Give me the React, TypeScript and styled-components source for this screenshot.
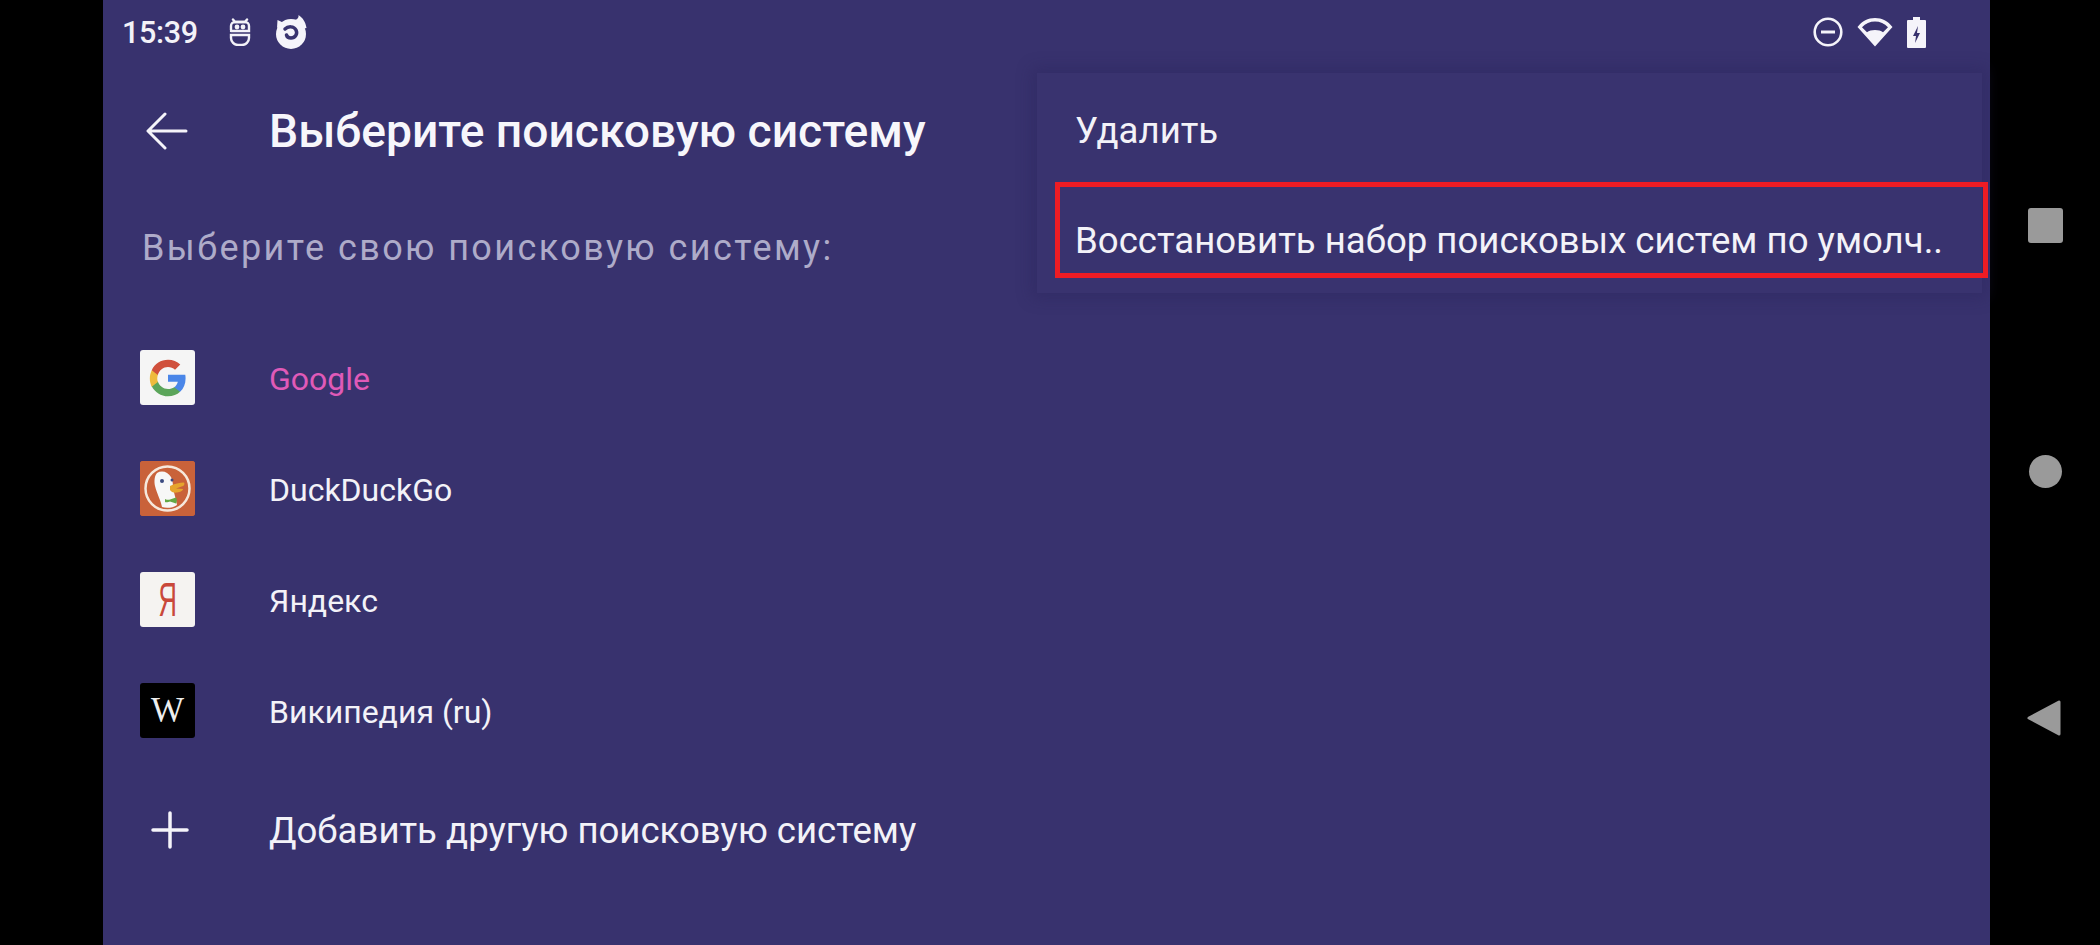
import styled, { createGlobalStyle } from "styled-components";

const GlobalStyle = createGlobalStyle`
  html, body {
    margin: 0;
    padding: 0;
    background: #000;
    font-family: Roboto, "Noto Sans", sans-serif;
  }
`;

const Wrapper = styled.div`
  width: 2100px;
  height: 945px;
  display: flex;
  overflow: hidden;
  background: #000;
`;

const LeftEdge = styled.div`
  width: 103px;
  flex-shrink: 0;
`;

const Screen = styled.div`
  position: relative;
  width: 1887px;
  flex-shrink: 0;
  background: #38326e;
  color: #f3f2f8;
  display: flex;
  flex-direction: column;
`;

const StatusBar = styled.div`
  height: 66px;
  box-sizing: border-box;
  display: flex;
  align-items: center;
  padding: 0 64px 2px 19px;
`;

const Time = styled.span`
  font-size: 30.5px;
  font-weight: 500;
  letter-spacing: -0.3px;
  width: 107px;
`;

const StatusLeft = styled.div`
  display: flex;
  align-items: center;
  gap: 23px;
  flex: 1;
`;

const StatusRight = styled.div`
  display: flex;
  align-items: center;
  gap: 14px;
`;

const Toolbar = styled.div`
  height: 130px;
  display: flex;
  align-items: center;
`;

const IconSlot = styled.div`
  width: 166px;
  flex-shrink: 0;
  padding-left: 43px;
  box-sizing: border-box;
  display: flex;
  align-items: center;
`;

const Title = styled.h1`
  margin: 0;
  font-size: 46.2px;
  font-weight: 500;
  color: #f7f6fb;
`;

const SectionLabel = styled.div`
  margin: 7px 0 0 39px;
  height: 90px;
  font-size: 36px;
  line-height: 90px;
  letter-spacing: 2.4px;
  color: #aeabc9;
`;

const List = styled.div`
  display: flex;
  flex-direction: column;
  margin-top: 29px;
`;

const Row = styled.div`
  height: 111px;
  display: flex;
  align-items: center;
`;

const LogoSlot = styled.div<{ $inset?: number }>`
  width: 166px;
  flex-shrink: 0;
  padding-left: ${p => p.$inset ?? 37}px;
  box-sizing: border-box;
  display: flex;
`;

const LogoBox = styled.div<{ $bg: string; $fg?: string }>`
  width: 55px;
  height: 55px;
  border-radius: 3px;
  background: ${p => p.$bg};
  color: ${p => p.$fg || "#fff"};
  display: flex;
  align-items: center;
  justify-content: center;
  overflow: hidden;
`;

const YandexLetter = styled.span`
  font-family: "Liberation Sans", sans-serif;
  font-size: 49px;
  line-height: 1;
  display: inline-block;
  transform: scaleX(0.52);
`;

const WikiLetter = styled.span`
  font-family: "Liberation Serif", serif;
  font-size: 35px;
  line-height: 1;
  color: #eeeeee;
`;

const RowText = styled.span<{ $accent?: boolean; $large?: boolean }>`
  font-size: ${p => (p.$large ? 36.6 : 32)}px;
  padding-top: 2px;
  color: ${p => (p.$accent ? "#e05ab8" : "#f3f2f8")};
`;

const AddRow = styled(Row)`
  height: 125px;
  margin-top: 1px;
`;

const Menu = styled.div`
  position: absolute;
  top: 73px;
  right: 8px;
  width: 945px;
  height: 220px;
  background: #39336f;
  box-shadow: 0 0 14px 5px rgba(40, 34, 90, 0.35);
  box-sizing: border-box;
  padding: 2px 38px 0;
`;

const MenuItem = styled.div`
  height: 110px;
  display: flex;
  align-items: center;
  font-size: 36.6px;
  white-space: nowrap;
  color: #f3f2f8;
`;

const Highlight = styled.div`
  position: absolute;
  top: 182px;
  left: 952px;
  width: 933px;
  height: 96px;
  box-sizing: border-box;
  border: 5px solid #ed1c24;
`;

const NavRail = styled.div`
  width: 110px;
  flex-shrink: 0;
  padding-top: 208px;
  box-sizing: border-box;
  display: flex;
  flex-direction: column;
  align-items: center;
  gap: 212px;
`;

const NavSquare = styled.div`
  width: 35px;
  height: 35px;
  border-radius: 3px;
  background: #9a9a9a;
`;

const NavCircle = styled.div`
  width: 33px;
  height: 33px;
  border-radius: 50%;
  background: #9a9a9a;
`;

const NavBack = styled.svg`
  margin-right: 3px;
`;

const BackSvg = () => (
  <svg width="42" height="38" viewBox="0 0 42 38" fill="none" stroke="#f5f4fa" strokeWidth="3" strokeLinecap="round" strokeLinejoin="round">
    <path d="M40 19H3M19 2 2 19l17 17" />
  </svg>
);

const BotIcon = () => (
  <svg width="22" height="28" viewBox="0 0 22 28" fill="none" stroke="#f3f2f8" strokeWidth="2.4" strokeLinecap="round">
    <path d="M4 1.500l2 2.500h10l2-2.500" />
    <path d="M2 12V8a4 4 0 0 1 4-4h10a4 4 0 0 1 4 4v5H2" />
    <path d="M2 17h18v3a7 7 0 0 1-7 7H9a7 7 0 0 1-7-7z" />
    <circle cx="8" cy="9" r="1.200" fill="#f3f2f8" />
    <circle cx="14" cy="9" r="1.200" fill="#f3f2f8" />
  </svg>
);

const FoxIcon = () => (
  <svg width="34" height="34" viewBox="0 0 34 34">
    <circle cx="17" cy="19" r="15" fill="#f5f4fa" />
    <path fill="#f5f4fa" d="M18 6c5-1 7-3 6.500-6C29 3 31.500 7 32.500 13L24 15z" />
    <path fill="#f5f4fa" d="M3 13 3.500 5 10 8z" />
    <path fill="none" stroke="#38326e" strokeWidth="3.500" strokeLinecap="round" d="M11 14c3-3 9-3 11 1 2 4-1 8-5 8-2 0-4-1-4.500-3" />
  </svg>
);

const DndIcon = () => (
  <svg width="30" height="30" viewBox="0 0 30 30" fill="none" stroke="#f5f4fa" strokeWidth="2.6">
    <circle cx="15" cy="15" r="13.300" />
    <path d="M8 15h14" strokeWidth="3" />
  </svg>
);

const WifiIcon = () => (
  <svg width="36" height="30" viewBox="0 0 36 30">
    <path fill="#f5f4fa" fillRule="evenodd" d="M18 29.500 0.500 10C5 4 11 1 18 1s13 3 17.500 9zM18 13c3.500 0 6 .8 8 2.300l5-5C27.500 6.500 23 4.500 18 4.500S8.500 6.500 5 10.300l5 5c2-1.500 4.500-2.300 8-2.300z" />
  </svg>
);

const BatteryIcon = () => (
  <svg width="19" height="31" viewBox="0 0 19 31">
    <path fill="#f5f4fa" fillRule="evenodd" d="M6 0h7v3h5a1 1 0 0 1 1 1v26a1 1 0 0 1-1 1H1a1 1 0 0 1-1-1V4a1 1 0 0 1 1-1h5zM11 9l-5 10h3l-1 7 5-10h-3z" />
  </svg>
);

const PlusIcon = () => (
  <svg width="38" height="38" viewBox="0 0 38 38" stroke="#f5f4fa" strokeWidth="3.500" strokeLinecap="round">
    <path d="M19 2v34M2 19h34" />
  </svg>
);

const GoogleLogo = () => (
  <svg width="40" height="40" viewBox="0 0 48 48">
    <path fill="#4a86e8" d="M45.100 24.500c0-1.600-.1-3.100-.4-4.500H24v8.500h11.800c-.5 2.700-2.100 5-4.400 6.600v5.500h7.100c4.200-3.800 6.600-9.500 6.600-16.100z" />
    <path fill="#5ba55a" d="M24 46c5.900 0 10.900-2 14.500-5.400l-7.100-5.500c-2 1.300-4.500 2.100-7.400 2.100-5.700 0-10.500-3.800-12.200-9H4.500v5.700C8.100 41.100 15.500 46 24 46z" />
    <path fill="#eebb3d" d="M11.800 28.700c-.4-1.300-.7-2.700-.7-4.200s.3-2.900.7-4.200v-5.700H4.500C3 17.600 2.200 20.900 2.200 24.500s.8 6.900 2.300 9.900z" />
    <path fill="#d0503c" d="M24 10.900c3.200 0 6.100 1.100 8.400 3.300l6.300-6.300C34.900 4.300 29.900 2.200 24 2.200 15.500 2.200 8.100 7.100 4.500 14.600l7.300 5.700c1.700-5.600 6.500-9.400 12.200-9.400z" />
  </svg>
);

const DuckLogo = () => (
  <svg width="55" height="55" viewBox="0 0 55 55">
    <rect width="55" height="55" fill="#c9623a" />
    <circle cx="27.500" cy="27.500" r="22" fill="#c9623a" stroke="#f6e8dc" strokeWidth="2.500" />
    <path fill="#f7f7f7" d="M17 12c5-3 11-1 14 4 2 4 2 8 2 11 1 5 3 11 4 17-4 3-11 3.500-15 2-1-6-5-13-7-21-1-5-.5-10 2-13z" />
    <path fill="#e6a52e" d="M30 25c4-2 10-3.500 14-3.500 1 1 0 3-1 3.500l-7 2.500 7 .5c0 2-3 3-6 3.500-3 .5-6-.5-7-2.500z" />
    <path fill="#64a844" d="M25 38c2 1 4 1 5 .5l6-2c1 1 1 5 0 6l-6-2c-1 .5-4 1-5 .5z" />
    <circle cx="22" cy="20" r="2" fill="#3a4a80" />
    <circle cx="32" cy="19" r="1.500" fill="#3a4a80" />
  </svg>
);

const BackTriangle = () => (
  <NavBack width="34" height="36" viewBox="0 0 34 36">
    <path fill="#9a9a9a" stroke="#9a9a9a" strokeWidth="3" strokeLinejoin="round" d="M32 2v32L2 18z" />
  </NavBack>
);

const engines = [
  { name: "Google", accent: true, logo: <LogoBox $bg="#f5f5f5"><GoogleLogo /></LogoBox> },
  { name: "DuckDuckGo", logo: <LogoBox $bg="#c9623a"><DuckLogo /></LogoBox> },
  { name: "Яндекс", logo: <LogoBox $bg="#f5f3f1" $fg="#c9483a"><YandexLetter>Я</YandexLetter></LogoBox> },
  { name: "Википедия (ru)", logo: <LogoBox $bg="#000"><WikiLetter>W</WikiLetter></LogoBox> },
];

function App() {
  return (
    <>
      <GlobalStyle />
      <Wrapper>
        <LeftEdge />
        <Screen>
          <StatusBar>
            <Time>15:39</Time>
            <StatusLeft>
              <BotIcon />
              <FoxIcon />
            </StatusLeft>
            <StatusRight>
              <DndIcon />
              <WifiIcon />
              <BatteryIcon />
            </StatusRight>
          </StatusBar>
          <Toolbar>
            <IconSlot>
              <BackSvg />
            </IconSlot>
            <Title>Выберите поисковую систему</Title>
          </Toolbar>
          <SectionLabel>Выберите свою поисковую систему:</SectionLabel>
          <List>
            {engines.map(engine => (
              <Row key={engine.name}>
                <LogoSlot>{engine.logo}</LogoSlot>
                <RowText $accent={engine.accent}>{engine.name}</RowText>
              </Row>
            ))}
            <AddRow>
              <LogoSlot $inset={48}>
                <PlusIcon />
              </LogoSlot>
              <RowText $large>Добавить другую поисковую систему</RowText>
            </AddRow>
          </List>
          <Menu>
            <MenuItem>Удалить</MenuItem>
            <MenuItem>Восстановить набор поисковых систем по умолч..</MenuItem>
          </Menu>
          <Highlight />
        </Screen>
        <NavRail>
          <NavSquare />
          <NavCircle />
          <BackTriangle />
        </NavRail>
      </Wrapper>
    </>
  );
}

export default App;
